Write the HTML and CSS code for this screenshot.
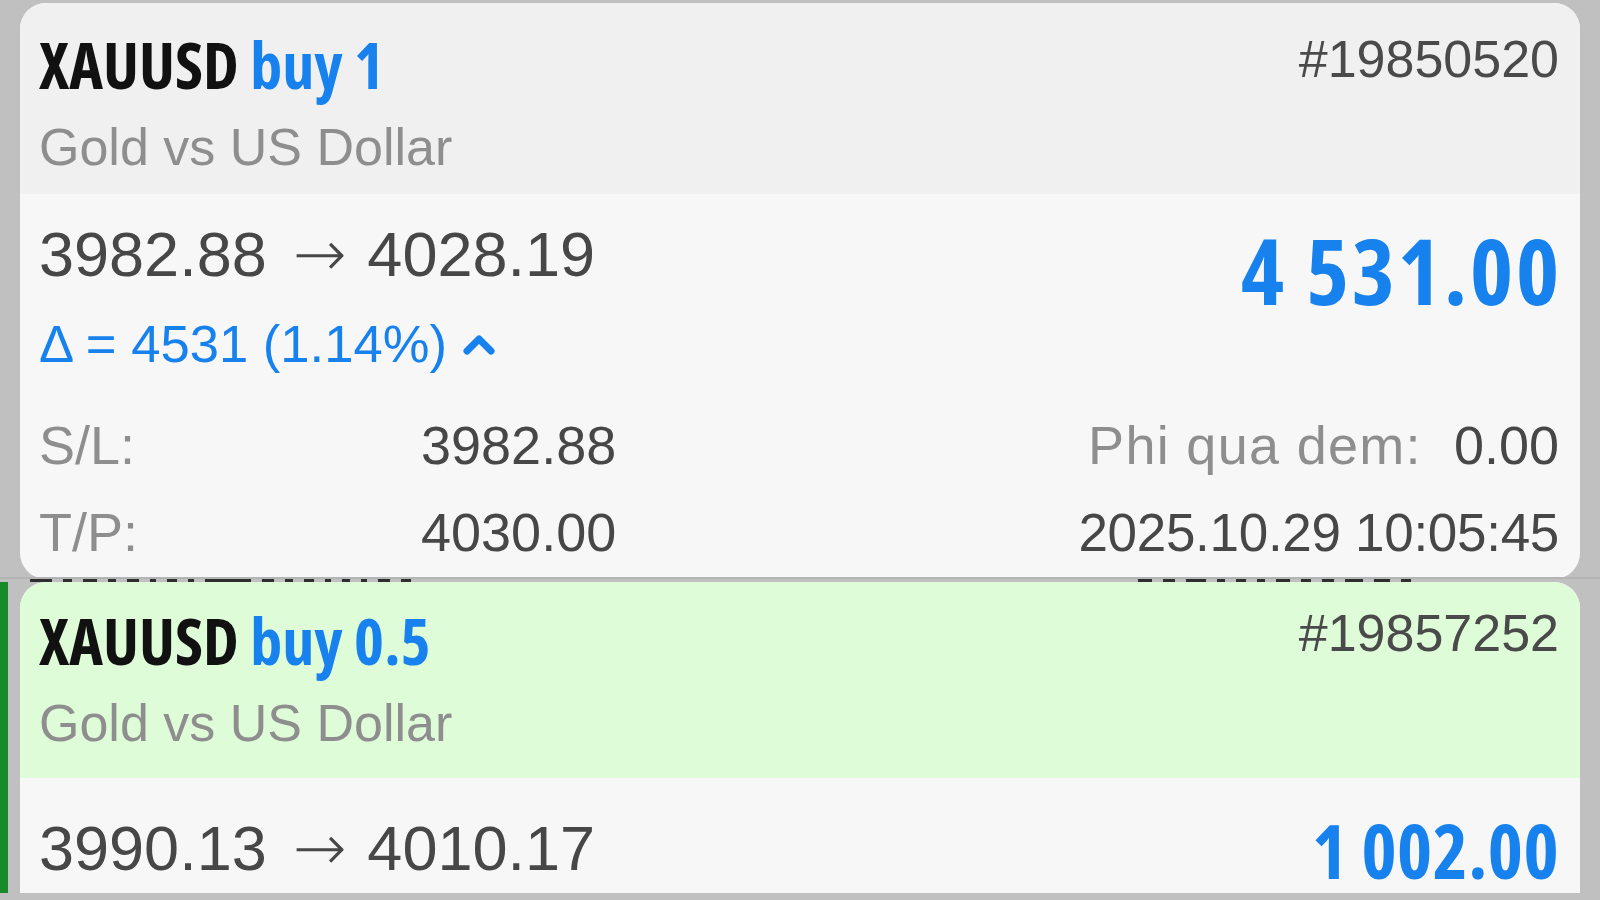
FILE: index.html
```html
<!DOCTYPE html>
<html lang="vi">
<head>
<meta charset="utf-8">
<title>Positions</title>
<link rel="stylesheet" href="styles.css">
</head>
<body>
<div class="screen">
  <div class="row">
    <div class="marker"></div>
    <article class="card">
      <header class="head">
        <div class="head-main">
          <div class="title"><span class="sym">XAUUSD</span> <span class="side">buy 1</span></div>
          <div class="desc">Gold vs US Dollar</div>
        </div>
        <div class="ticket">#19850520</div>
      </header>
      <div class="body">
        <div class="summary">
          <div class="summary-left">
            <div class="prices">3982.88<span class="arrow">→</span>4028.19</div>
            <div class="delta">Δ = 4531 (1.14%)
              <svg class="chev" viewBox="0 0 34 22" width="34" height="22"><path d="M5 17 L17 5 L29 17" fill="none" stroke="#1781ee" stroke-width="7" stroke-linecap="round" stroke-linejoin="round"/></svg>
            </div>
          </div>
          <div class="profit">4 531.00</div>
        </div>
        <div class="details">
          <span class="lbl">S/L:</span><span class="val">3982.88</span><span class="right"><span class="lbl lbl-wide">Phi qua dem:</span><span class="val">0.00</span></span>
          <span class="lbl">T/P:</span><span class="val">4030.00</span><span class="right"><span class="val val-date">2025.10.29 10:05:45</span></span>
        </div>
      </div>
    </article>
  </div>
  <div class="peek">
    <div class="frag-group">
      <i style="width:22px"></i><i style="width:9px"></i><i style="width:14px"></i><i style="width:8px"></i><i style="width:12px"></i><i style="width:6px"></i><i style="width:10px"></i><i style="width:6px"></i><i style="width:46px"></i><i style="width:12px"></i><i style="width:8px"></i><i style="width:10px"></i><i style="width:6px"></i><i style="width:8px"></i><i style="width:6px"></i><i style="width:12px"></i><i style="width:10px"></i>
    </div>
    <div class="frag-group">
      <i style="width:14px"></i><i style="width:12px"></i><i style="width:20px"></i><i style="width:8px"></i><i style="width:10px"></i><i style="width:8px"></i><i style="width:14px"></i><i style="width:10px"></i><i style="width:12px"></i><i style="width:18px"></i><i style="width:16px"></i><i style="width:10px"></i>
    </div>
  </div>
  <div class="row row-active">
    <div class="marker"></div>
    <article class="card card-open">
      <header class="head">
        <div class="head-main">
          <div class="title"><span class="sym">XAUUSD</span> <span class="side">buy 0.5</span></div>
          <div class="desc">Gold vs US Dollar</div>
        </div>
        <div class="ticket">#19857252</div>
      </header>
      <div class="body">
        <div class="summary">
          <div class="summary-left">
            <div class="prices">3990.13<span class="arrow">→</span>4010.17</div>
          </div>
          <div class="profit profit-sm">1 002.00</div>
        </div>
      </div>
    </article>
  </div>
</div>
</body>
</html>
```
FILE: styles.css
```css
html, body {
  margin: 0;
  padding: 0;
}
body {
  background: #c0c0c0;
  width: 1600px;
  height: 900px;
  overflow: hidden;
  font-family: "Liberation Sans", Arial, sans-serif;
  color: #4a4a4a;
}
.screen {
  padding-top: 3px;
  display: flex;
  flex-direction: column;
}
.row {
  display: flex;
}
.marker {
  width: 8px;
  flex: none;
}
.row-active .marker {
  background: #198a2a;
}
.card {
  flex: 1;
  margin: 0 20px 0 12px;
  border-radius: 26px;
  overflow: hidden;
  background: #f7f7f7;
}
.card-open {
  border-bottom-left-radius: 0;
  border-bottom-right-radius: 0;
}
.head {
  height: 191px;
  box-sizing: border-box;
  background: #f0f0f0;
  padding: 19px 21px 0 19px;
  display: flex;
  justify-content: space-between;
  align-items: flex-start;
}
.card-open .head {
  background: #dffcd9;
  height: 196px;
  padding-top: 16px;
}
.title {
  font-family: "Open Sans", sans-serif;
  font-stretch: 77%;
  font-weight: 700;
  font-size: 64px;
  line-height: 85px;
  white-space: nowrap;
}
.sym { color: #111; }
.side { color: #1781ee; }
.desc {
  font-size: 52px;
  line-height: 80px;
  color: #8e8e8e;
}
.ticket {
  font-size: 52px;
  line-height: 60px;
  margin-top: 7px;
  color: #4a4a4a;
}
.card-open .ticket {
  margin-top: 5px;
}
.body {
  padding: 20px 21px 3px 19px;
}
.card-open .body {
  padding-top: 30px;
}
.summary {
  display: flex;
  justify-content: space-between;
  align-items: flex-start;
}
.prices {
  font-size: 63px;
  line-height: 80px;
  color: #474747;
  white-space: nowrap;
}
.arrow {
  font-family: "DejaVu Sans", sans-serif;
  font-weight: 200;
  font-size: 64px;
  margin: 0 21px 0 26px;
}
.delta {
  margin-top: 15px;
  font-size: 52.6px;
  line-height: 70px;
  color: #1781ee;
  display: flex;
  align-items: center;
  gap: 15px;
}
.chev {
  margin-top: 1px;
}
.profit {
  font-family: "Open Sans", sans-serif;
  font-stretch: 75%;
  font-weight: 700;
  font-size: 92px;
  line-height: 100px;
  letter-spacing: 2.8px;
  margin-right: -3px;
  color: #1781ee;
  margin-top: 6px;
  white-space: nowrap;
}
.profit-sm {
  font-size: 75px;
  line-height: 80px;
  letter-spacing: 0.4px;
  margin-right: 0;
  margin-top: 2px;
}
.details {
  margin-top: 23px;
  display: grid;
  grid-template-columns: 382px 1fr auto;
  font-size: 54px;
  line-height: 87px;
}
.lbl {
  color: #8e8e8e;
}
.lbl-wide {
  letter-spacing: 1.3px;
}
.val {
  color: #474747;
}
.val-date {
  font-size: 53px;
  letter-spacing: -0.3px;
}
.right {
  display: flex;
  justify-content: flex-end;
  gap: 32px;
}
.peek {
  height: 3px;
  border-top: 2px solid #b4b4b4;
  margin-top: -2px;
  display: flex;
  justify-content: space-between;
  padding: 0 22px 0 30px;
}
.frag-group {
  display: flex;
  gap: 11px;
  width: 440px;
}
.frag-group i {
  display: block;
  height: 3px;
  background: #2e2e2e;
}
```
